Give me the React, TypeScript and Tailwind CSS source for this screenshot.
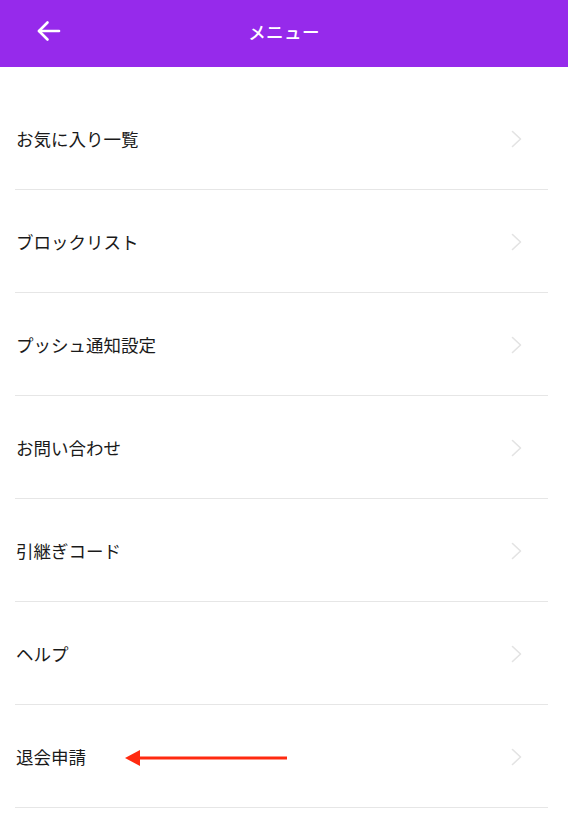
const items = [
  "お気に入り一覧",
  "ブロックリスト",
  "プッシュ通知設定",
  "お問い合わせ",
  "引継ぎコード",
  "ヘルプ",
  "退会申請",
];

function Chevron() {
  return (
    <svg width="12" height="18" viewBox="0 0 12 18" fill="none">
      <path d="M1.5 1.5L9.5 9L1.5 16.5" stroke="#e3e3e3" strokeWidth="1.6" strokeLinecap="round" strokeLinejoin="round" />
    </svg>
  );
}

function RedArrow() {
  return (
    <svg width="164" height="20" viewBox="0 0 164 20" fill="none">
      <path d="M12 10H162" stroke="#ff2a10" strokeWidth="3" />
      <path d="M0 10L15 2V18Z" fill="#ff2a10" />
    </svg>
  );
}

export default function App() {
  return (
    <div
      className="w-[568px] h-[828px] bg-white overflow-hidden"
      style={{ fontFamily: '"Noto Sans CJK JP", "Noto Sans", sans-serif' }}
    >
      {/* Header */}
      <div className="h-[67px] bg-[#962aeb] flex items-center relative">
        <div className="absolute left-[36px] top-[19px]">
          <svg width="26" height="24" viewBox="0 0 26 24" fill="none">
            <path d="M3 12H23" stroke="white" strokeWidth="2.6" strokeLinecap="round" />
            <path d="M11.5 3.5L3 12L11.5 20.5" stroke="white" strokeWidth="2.6" strokeLinecap="round" strokeLinejoin="round" />
          </svg>
        </div>
        <h1 className="flex-1 text-center text-white text-[17.5px] font-medium tracking-wide pb-[2px]">メニュー</h1>
      </div>

      {/* Menu list */}
      <div className="pt-[20px] pl-[15px] pr-[20px]">
        {items.map((label, idx) => (
          <div key={idx} className="h-[103px] flex items-center justify-between border-b border-[#e6e6e6] pl-[1px] pr-[25px] pt-[2px]">
            <div className="flex items-center">
              <span className="text-[17.5px] text-[#1a1a1a]">{label}</span>
              {label === "退会申請" && (
                <span className="ml-[39px] mt-[2px] flex">
                  <RedArrow />
                </span>
              )}
            </div>
            <Chevron />
          </div>
        ))}
      </div>
    </div>
  );
}
